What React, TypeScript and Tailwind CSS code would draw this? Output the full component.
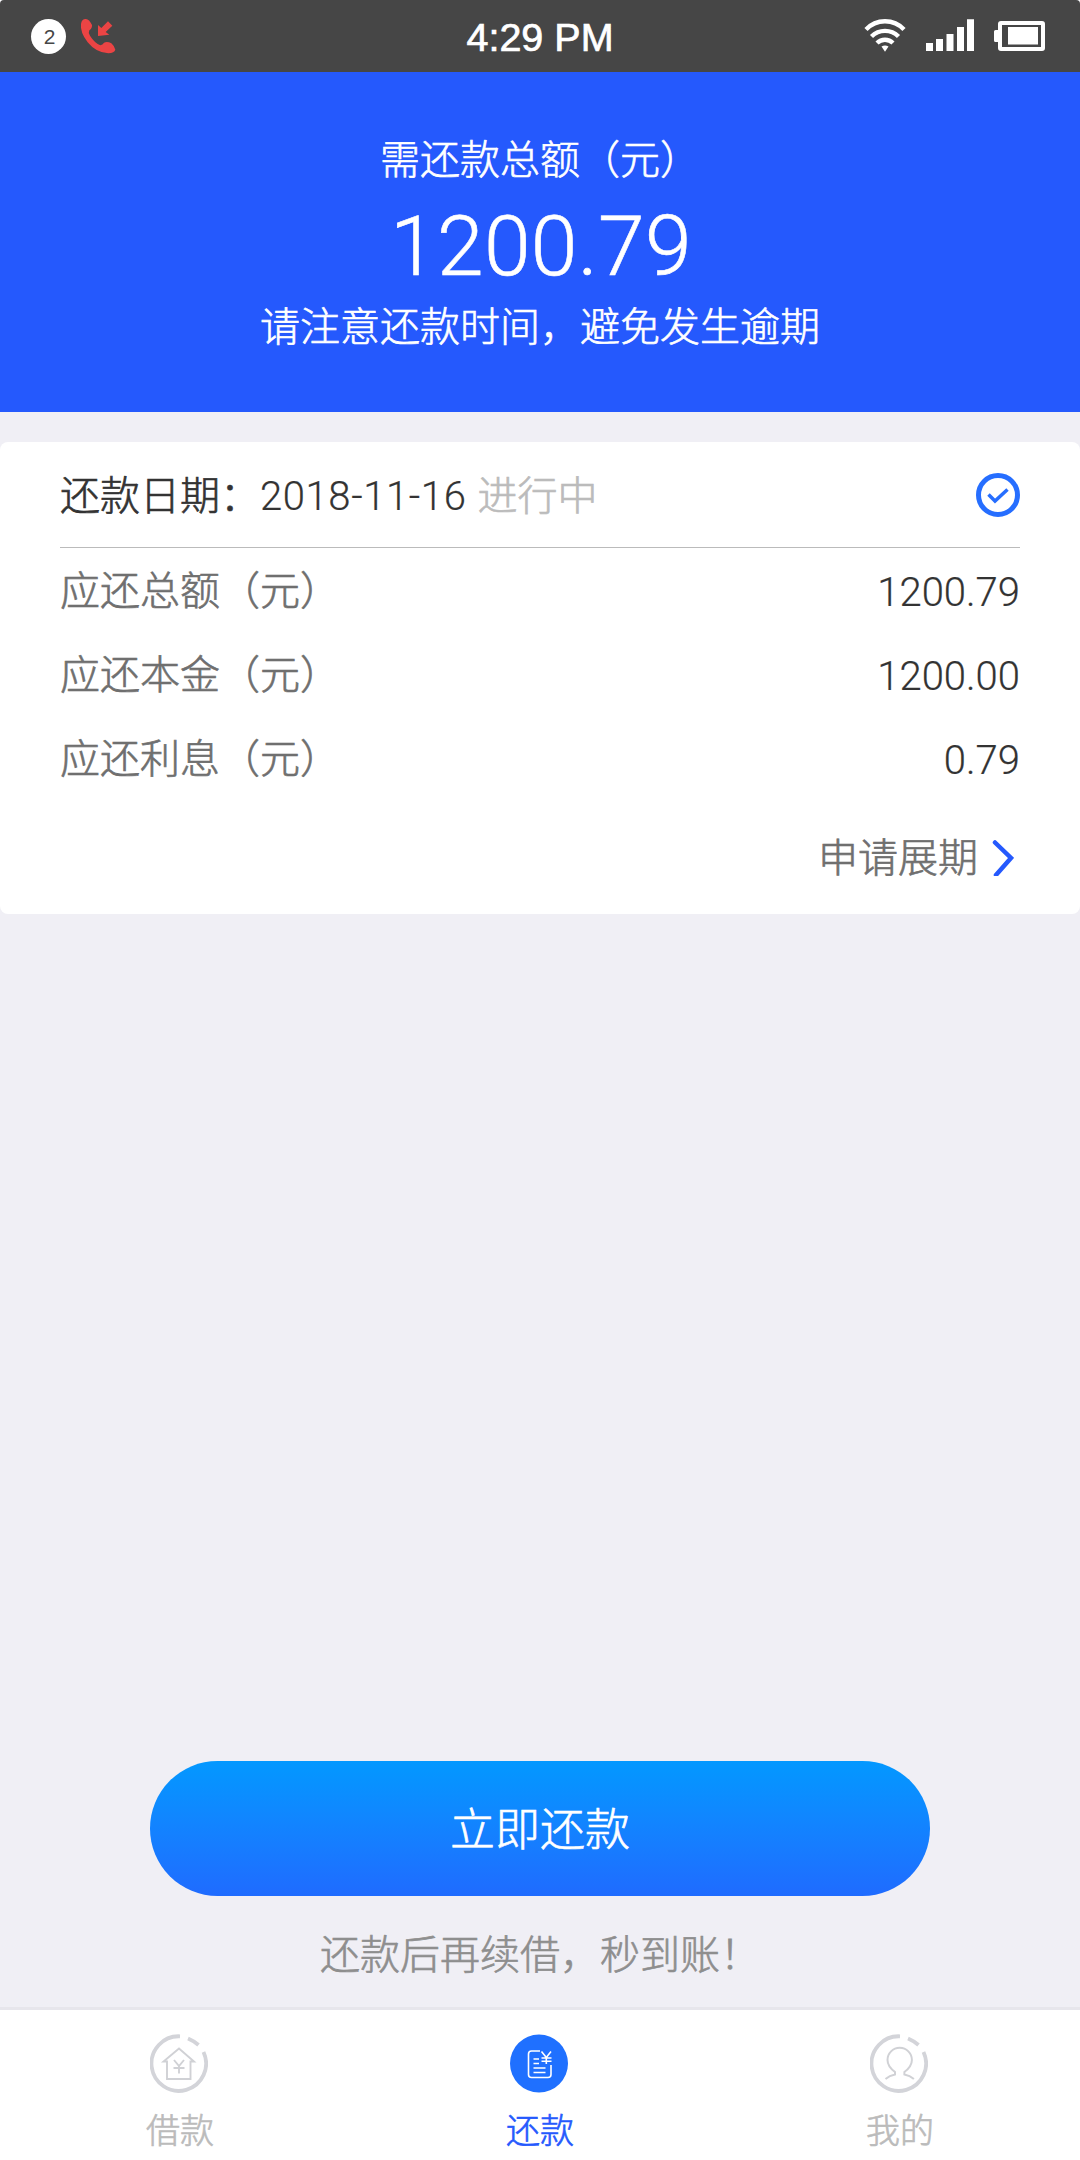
import type { ReactNode } from 'react';
import clsx from 'clsx';

const details = [
  { label: '应还总额（元）', value: '1200.79' },
  { label: '应还本金（元）', value: '1200.00' },
  { label: '应还利息（元）', value: '0.79' },
];

export default function App() {
  return (
    <div className="bg-white">
      <div className="flex h-[2160px] w-[1080px] flex-col overflow-hidden rounded-t-[4px] bg-[#f0eff5] font-['Liberation_Sans','Noto_Sans_CJK_SC',sans-serif] text-[40px] leading-[60px] font-light [-webkit-text-stroke-width:0.65px]">
        <StatusBar />
        <Summary />
        <RepaymentCard />
        <div className="mt-auto flex flex-col items-center">
          <button className="h-[135px] w-[780px] rounded-full bg-linear-to-b from-[#0398ff] to-[#1f6bff] pt-[4px] text-[45px] text-white">
            立即还款
          </button>
          <p className="mt-[29px] mb-[22px] text-[#8e8e8e]">还款后再续借，秒到账！</p>
        </div>
        <TabBar />
      </div>
    </div>
  );
}

function StatusBar() {
  return (
    <header className="grid h-[72px] shrink-0 grid-cols-3 items-center bg-[#464646] text-white">
      <div className="flex items-center pl-[31px]">
        <span className="flex size-[35px] items-center justify-center rounded-full bg-white pl-[2px] text-[21px] leading-none text-[#464646] [-webkit-text-stroke-width:0]">
          2
        </span>
        <MissedCallIcon />
      </div>
      <div className="pt-[3px] text-center text-[39.5px] leading-none [-webkit-text-stroke-width:0.7px]">4:29 PM</div>
      <div className="flex justify-end pr-[34px]">
        <svg width="184" height="72" viewBox="862 0 184 72" fill="none" stroke="white">
          <path d="M866 29.5a26 26 0 0 1 38 0M871.5 36.5a19 19 0 0 1 27 0M877 43a11.5 11.5 0 0 1 16 0" strokeWidth="4.4" />
          <path d="M881.5 46.5q3.500-2 7 0l-3.500 5.200z" fill="white" stroke="none" />
          <path d="M926 43h7v8h-7zM936 39h7v12h-7zM946.500 34h7v17h-7zM957 27h7v24h-7zM967 19.300h7V51h-7z" fill="white" stroke="none" />
          <rect x="1000" y="23" width="43" height="26" rx="1" strokeWidth="4" />
          <path d="M1008 27h30v17.500h-30zM998 30h-2.500q-1.500 0-1.500 1.500v9q0 1.500 1.500 1.500h2.500z" fill="white" stroke="none" />
        </svg>
      </div>
    </header>
  );
}

function MissedCallIcon() {
  return (
    <svg className="ml-[14px]" width="36" height="36" viewBox="240 54 108 108" fill="#eb4444">
      <path d="M243 72Q245 57 257 57Q267 56 276 75Q277 85 268 91Q264 98 270 107Q283 128 301 136Q308 134 312 128Q322 123 334 130Q345 140 346 149Q343 159 325 160Q289 159 263 127Q240 97 243 72Z" />
      <path d="M294 108V75L304 84L324 64L337 77L317 96L328 104Z" />
    </svg>
  );
}

function Summary() {
  return (
    <section className="h-[340px] shrink-0 bg-[#2559fd] pt-[58px] text-center text-white">
      <p>需还款总额（元）</p>
      <p className="mt-[9px] h-[88px] pl-[2px] font-[Roboto] text-[84px] leading-[96px] tracking-[0.3px] [-webkit-text-stroke-width:0.6px]">
        1200.79
      </p>
      <p className="mt-[10px]">请注意还款时间，避免发生逾期</p>
    </section>
  );
}

function RepaymentCard() {
  return (
    <section className="mt-[30px] h-[472px] shrink-0 rounded-[8px] bg-white px-[60px]">
      <div className="flex h-[106px] items-center justify-between border-b border-[#bbbbbb] text-[#333]">
        <div className="flex pt-[3px]">
          <span>还款日期：</span>
          <span className="pt-px font-[Roboto] tracking-[0.6px] [-webkit-text-stroke-width:0.2px]">2018-11-16</span>
          <span className="ml-[11px] text-[#bbb]">进行中</span>
        </div>
        <svg width="44" height="44" viewBox="0 0 44 44" fill="none" stroke="#266eff">
          <circle cx="22" cy="22" r="19.500" strokeWidth="5" />
          <path d="M12.500 21.500l6.500 6.500 12.500-11.500" strokeWidth="3.500" />
        </svg>
      </div>
      <dl className="mt-[13px] flex flex-col gap-[24px]">
        {details.map((item) => (
          <div key={item.label} className="flex h-[60px] justify-between">
            <dt className="text-[#6f6f6f]">{item.label}</dt>
            <dd className="pt-[2px] font-[Roboto] text-[#333] [-webkit-text-stroke-width:0.2px]">{item.value}</dd>
          </div>
        ))}
      </dl>
      <div className="mt-[39px] flex items-center justify-end pr-[6px] text-[#6f6f6f]">
        <span>申请展期</span>
        <svg className="ml-[14px]" width="22" height="36" viewBox="0 0 22 36" fill="none" stroke="#2559fd" strokeWidth="4.500" strokeLinecap="round">
          <path d="M3 2.500l16 15.500L4 35" />
        </svg>
      </div>
    </section>
  );
}

function TabBar() {
  return (
    <nav className="grid h-[153px] shrink-0 grid-cols-3 border-t-[3px] border-[#e7e6ec] bg-white">
      <Tab label="借款">
        <Ring />
        <g stroke="#d0d1d5" strokeWidth="1.900">
          <path d="M17 27.500h-3.500L29 14.500l15 13h-3.500V45H17z" />
          <path d="M24 26l5 6 5-6M29 32v7.500M23.500 34h11" />
        </g>
      </Tab>
      <Tab label="还款" active>
        <circle cx="29" cy="29.500" r="29" fill="#1f70ff" />
        <g stroke="white" strokeWidth="1.600">
          <path d="M30 17h-8.500q-3 0-3 3v20.500q0 3 3 3H38q3 0 3-3V31M23.500 25h5.500M23.500 29.500h5.500M23.500 34h12M23.500 38.500h12" />
          <path d="M31.500 17.500l4.800 6 4.700-6M36.300 23.500V30M31.500 24h10M31.500 27.300h10" />
        </g>
      </Tab>
      <Tab label="我的">
        <Ring />
        <path
          d="M15.500 45q4-3.500 9.500-4.500V38c-4-3-7.500-7-7.500-12a12.200 12.200 0 0 1 24.400 0c0 5-3.500 9-7.500 12v2.500q5.500 1 9.500 4.500"
          stroke="#d0d1d5"
          strokeWidth="2"
        />
      </Tab>
    </nav>
  );
}

function Tab({ label, active, children }: { label: string; active?: boolean; children: ReactNode }) {
  return (
    <a className={clsx('flex flex-col items-center pt-[24px] text-[34px] leading-[50px]', active ? 'text-[#2559fd]' : 'text-[#bbb]')}>
      <svg className="mr-[2px]" width="58" height="59" viewBox="0 0 58 59" fill="none">
        {children}
      </svg>
      <span className="mt-[13px]">{label}</span>
    </a>
  );
}

// circle with a short detached dash at the top right
function Ring() {
  return (
    <path
      d="M30 2.300A27.300 27.300 0 1 0 53.500 18M38 4.500Q44 7 48.500 11"
      stroke="#d3d4d9"
      strokeWidth="3.800"
    />
  );
}
